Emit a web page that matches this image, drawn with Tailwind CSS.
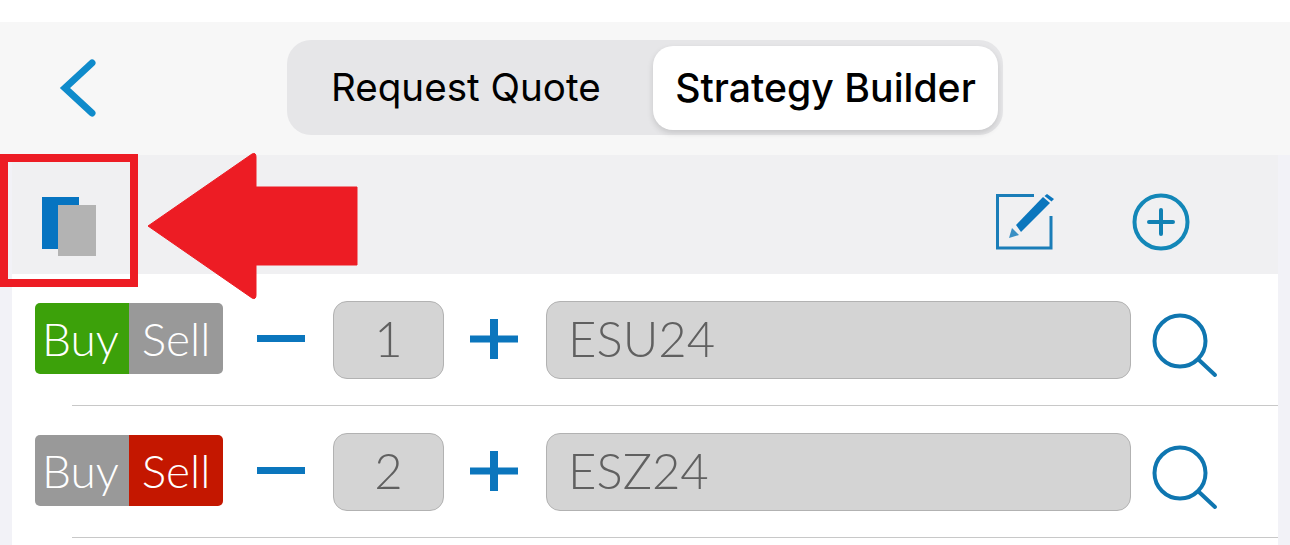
<!doctype html>
<html>
<head>
<meta charset="utf-8">
<script src="https://cdn.jsdelivr.net/npm/@tailwindcss/browser@4"></script>
</head>
<body class="bg-white">
<div class="relative w-[1290px] h-[545px] overflow-hidden bg-white pt-[22px]">
  <header class="h-[133px] bg-[#f7f7f7] relative flex items-start justify-center pt-[18px]">
    <button class="absolute left-[56px] top-[35px]" aria-label="Back">
      <svg width="44" height="64" viewBox="0 0 44 64" fill="none"><path d="M36 6 L9 31 L36 56" stroke="#0f8bcb" stroke-width="7" stroke-linecap="round" stroke-linejoin="miter"/></svg>
    </button>
    <div class="w-[716px] h-[95px] rounded-[24px] bg-[#e6e6e8] flex items-center pl-[44px] pr-[5px]">
      <span class="w-[322px] text-[38.6px] leading-none text-black font-['Inter',sans-serif]">Request Quote</span>
      <span class="w-[345px] h-[84px] rounded-[20px] bg-white shadow-[0_3px_6px_rgba(0,0,0,0.14)] flex items-center justify-center text-[39.2px] leading-none font-medium text-black font-['Inter',sans-serif]">Strategy Builder</span>
    </div>
  </header>
  <main class="bg-[#f2f2f7] h-[390px] px-[12px]">
    <div class="h-[119px] bg-[#f0f0f2] flex items-center justify-end gap-[77px] pr-[88px] pt-[14px]">
      <svg width="60" height="58" viewBox="0 0 60 58" fill="none">
        <path d="M39 2.5 H2.5 V55 H56 V23" stroke="#1a7db8" stroke-width="3"/>
        <path d="M48 4 L55 10 L26 39 L21 32 Z" fill="#0b76bd"/>
        <path d="M52 1 L59 6 L56.5 8.5 L49.5 3 Z" fill="#0b76bd"/>
        <path d="M17 35 L24 42 L14 45 Z" fill="#3a8fc4"/>
      </svg>
      <svg width="58" height="58" viewBox="0 0 58 58" fill="none">
        <circle cx="29" cy="29" r="26.5" stroke="#1387b8" stroke-width="4"/>
        <path d="M17 29 H41 M29 17 V41" stroke="#1181b4" stroke-width="4" stroke-linecap="round"/>
      </svg>
    </div>
    <div class="bg-white h-[271px]">
      <div class="h-[132px]">
        <div class="h-[131px] pl-[23px] flex items-start pt-[29px]">
          <div class="flex w-[188px] h-[71px] rounded-[5px] overflow-hidden text-white text-[46px] font-light font-['Lato',sans-serif] leading-none">
            <span class="w-[94px] pr-[3px] bg-[#3ca10a] flex items-center justify-center">Buy</span>
            <span class="w-[94px] bg-[#999999] flex items-center justify-center">Sell</span>
          </div>
          <svg class="ml-[34px] mt-[32px]" width="48" height="8"><rect width="48" height="7" fill="#0b76bd"/></svg>
          <div class="ml-[28px] -mt-[2px] w-[111px] h-[78px] pb-[4px] rounded-[14px] bg-[#d4d4d4] border border-[#b2b2b2] flex items-center justify-center text-[49px] text-[#606060] font-light font-['Lato',sans-serif] leading-none">1</div>
          <svg class="ml-[26px] mt-[16px]" width="48" height="40"><path d="M0 20 H48" stroke="#0b76bd" stroke-width="7"/><path d="M24 0 V40" stroke="#0b76bd" stroke-width="8"/></svg>
          <div class="ml-[28px] -mt-[2px] w-[585px] h-[78px] pb-[4px] rounded-[14px] bg-[#d4d4d4] border border-[#b2b2b2] flex items-center pl-[21px] text-[49px] text-[#606060] font-['Lato',sans-serif] font-light leading-none">ESU24</div>
          <svg class="ml-[21px] mt-[10px]" width="66" height="66" viewBox="0 0 66 66" fill="none"><circle cx="28" cy="28" r="25.5" stroke="#0f76b0" stroke-width="4"/><path d="M47 47 L63 62" stroke="#0f76b0" stroke-width="4" stroke-linecap="round"/></svg>
        </div>
        <div class="ml-[60px] h-px bg-[#c8c8c8]"></div>
      </div>
      <div class="h-[132px]">
        <div class="h-[131px] pl-[23px] flex items-start pt-[29px]">
          <div class="flex w-[188px] h-[71px] rounded-[5px] overflow-hidden text-white text-[46px] font-light font-['Lato',sans-serif] leading-none">
            <span class="w-[94px] pr-[3px] bg-[#999999] flex items-center justify-center">Buy</span>
            <span class="w-[94px] bg-[#c41700] flex items-center justify-center">Sell</span>
          </div>
          <svg class="ml-[34px] mt-[32px]" width="48" height="8"><rect width="48" height="7" fill="#0b76bd"/></svg>
          <div class="ml-[28px] -mt-[2px] w-[111px] h-[78px] pb-[4px] rounded-[14px] bg-[#d4d4d4] border border-[#b2b2b2] flex items-center justify-center text-[49px] text-[#606060] font-light font-['Lato',sans-serif] leading-none">2</div>
          <svg class="ml-[26px] mt-[16px]" width="48" height="40"><path d="M0 20 H48" stroke="#0b76bd" stroke-width="7"/><path d="M24 0 V40" stroke="#0b76bd" stroke-width="8"/></svg>
          <div class="ml-[28px] -mt-[2px] w-[585px] h-[78px] pb-[4px] rounded-[14px] bg-[#d4d4d4] border border-[#b2b2b2] flex items-center pl-[21px] text-[49px] text-[#606060] font-['Lato',sans-serif] font-light leading-none">ESZ24</div>
          <svg class="ml-[21px] mt-[10px]" width="66" height="66" viewBox="0 0 66 66" fill="none"><circle cx="28" cy="28" r="25.5" stroke="#0f76b0" stroke-width="4"/><path d="M47 47 L63 62" stroke="#0f76b0" stroke-width="4" stroke-linecap="round"/></svg>
        </div>
        <div class="ml-[60px] h-px bg-[#c8c8c8]"></div>
      </div>
    </div>
  </main>

  <!-- annotation overlays -->
  <div class="absolute left-0 top-[154px] w-[138px] h-[133px] border-[8px] border-[#ed1c24]"></div>
  <div class="absolute left-[42px] top-[197px] w-[37px] h-[52px] bg-[#0674c1]"></div>
  <div class="absolute left-[58px] top-[205px] w-[38px] h-[51px] bg-[#b3b3b3]"></div>
  <svg class="absolute left-[140px] top-[148px]" width="224" height="156" viewBox="0 0 224 156"><path d="M8 78 L112 6 Q116 4 116 9 V39 H217 V117 H116 V147 Q116 152 112 150 Z" fill="#ed1c24" stroke="#ed1c24" stroke-width="1" stroke-linejoin="round"/></svg>
</div>
</body>
</html>
